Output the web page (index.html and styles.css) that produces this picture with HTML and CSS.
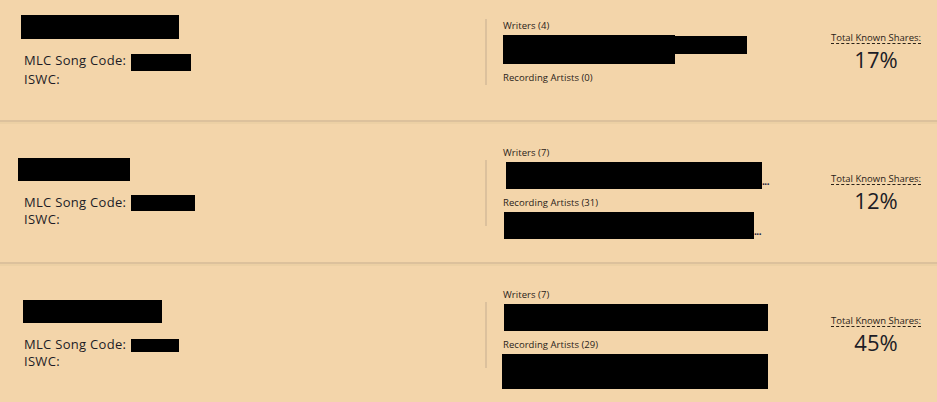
FILE: index.html
```html
<!DOCTYPE html>
<html lang="en">
<head>
<meta charset="utf-8">
<title>Songs</title>
<link rel="stylesheet" href="styles.css">
</head>
<body>
<div class="list">
  <div class="card card-first">
    <div class="left">
      <div class="title"><span class="redact" style="width:158px;height:24px;margin-left:-3px"></span></div>
      <div class="meta">MLC Song Code: <span class="redact code" style="width:60px;height:17px"></span></div>
      <div class="meta">ISWC:</div>
    </div>
    <div class="divider"></div>
    <div class="middle">
      <div class="label">Writers (4)</div>
      <div class="names names-top">
        <span class="redact" style="width:172px;height:29px"></span><span class="redact" style="width:72px;height:18px;margin-top:1px"></span>
      </div>
      <div class="label label-gap">Recording Artists (0)</div>
    </div>
    <div class="shares">
      <div class="shares-label">Total Known Shares:</div>
      <div class="shares-value">17%</div>
    </div>
  </div>

  <div class="card">
    <div class="left">
      <div class="title"><span class="redact" style="width:112px;height:23px;margin-left:-6px"></span></div>
      <div class="meta">MLC Song Code: <span class="redact code" style="width:64px;height:16px"></span></div>
      <div class="meta">ISWC:</div>
    </div>
    <div class="divider"></div>
    <div class="middle">
      <div class="label">Writers (7)</div>
      <div class="names"><span class="redact" style="width:256px;height:27px;margin-left:3px"></span><span class="more">...</span></div>
      <div class="label label-gap">Recording Artists (31)</div>
      <div class="names"><span class="redact" style="width:250px;height:27px;margin-left:1px"></span><span class="more">...</span></div>
    </div>
    <div class="shares">
      <div class="shares-label">Total Known Shares:</div>
      <div class="shares-value">12%</div>
    </div>
  </div>

  <div class="card">
    <div class="left">
      <div class="title"><span class="redact" style="width:139px;height:23px;margin-left:-1px"></span></div>
      <div class="meta">MLC Song Code: <span class="redact code" style="width:48px;height:13px"></span></div>
      <div class="meta">ISWC:</div>
    </div>
    <div class="divider"></div>
    <div class="middle">
      <div class="label">Writers (7)</div>
      <div class="names"><span class="redact" style="width:264px;height:27px;margin-left:1px"></span></div>
      <div class="label label-gap">Recording Artists (29)</div>
      <div class="names names-tall"><span class="redact" style="width:266px;height:35px;margin-left:-1px"></span></div>
    </div>
    <div class="shares">
      <div class="shares-label">Total Known Shares:</div>
      <div class="shares-value">45%</div>
    </div>
  </div>
</div>
</body>
</html>
```

FILE: styles.css
```css
html, body {
  margin: 0;
  padding: 0;
  background: #f3d5aa;
  overflow: hidden;
}

body {
  font-family: "Open Sans", "Liberation Sans", sans-serif;
  color: #1c1c26;
}

.list {
  display: flex;
  flex-direction: column;
}

.card {
  display: flex;
  align-items: center;
  box-sizing: border-box;
  height: 142px;
  background: #f3d5aa;
  border-top: 2px solid #ecd0a4;
  border-bottom: 2px solid #dcc19c;
}

.card-first {
  margin-top: -17px;
  height: 139px;
  border-top: none;
}

.left {
  width: 485px;
  box-sizing: border-box;
  padding-left: 24px;
}

.title {
  display: flex;
  margin-bottom: 13px;
}

.redact {
  display: inline-block;
  background: #000;
  vertical-align: middle;
}

.meta {
  font-size: 13px;
  line-height: 17px;
  letter-spacing: 0.3px;
}

.code {
  margin-left: 1px;
}

.divider {
  width: 2px;
  height: 66px;
  background: #dcc19d;
  flex: none;
}

.middle {
  padding-left: 16px;
  width: 300px;
  display: flex;
  flex-direction: column;
}

.label {
  font-size: 9.5px;
  line-height: 12px;
  font-weight: 500;
  letter-spacing: 0.05px;
  color: #2a2218;
}

.label-gap {
  margin-top: 8px;
}

.names {
  display: flex;
  align-items: flex-end;
  margin-top: 3px;
}

.names-top {
  align-items: flex-start;
}

.names-tall {
  margin-bottom: -8px;
}

.more {
  font-size: 10px;
  line-height: 10px;
  font-weight: 700;
  color: #1c1c3a;
  letter-spacing: -0.5px;
  margin-bottom: 3px;
}

.shares {
  margin-left: auto;
  margin-bottom: 8px;
  width: 122px;
  text-align: center;
}

.shares-label {
  display: inline-block;
  font-size: 9.5px;
  line-height: 11px;
  color: #2a2218;
  border-bottom: 1px dashed #2a2218;
}

.shares-value {
  font-size: 22px;
  line-height: 26px;
  margin-top: 0;
  font-weight: 400;
}
```
